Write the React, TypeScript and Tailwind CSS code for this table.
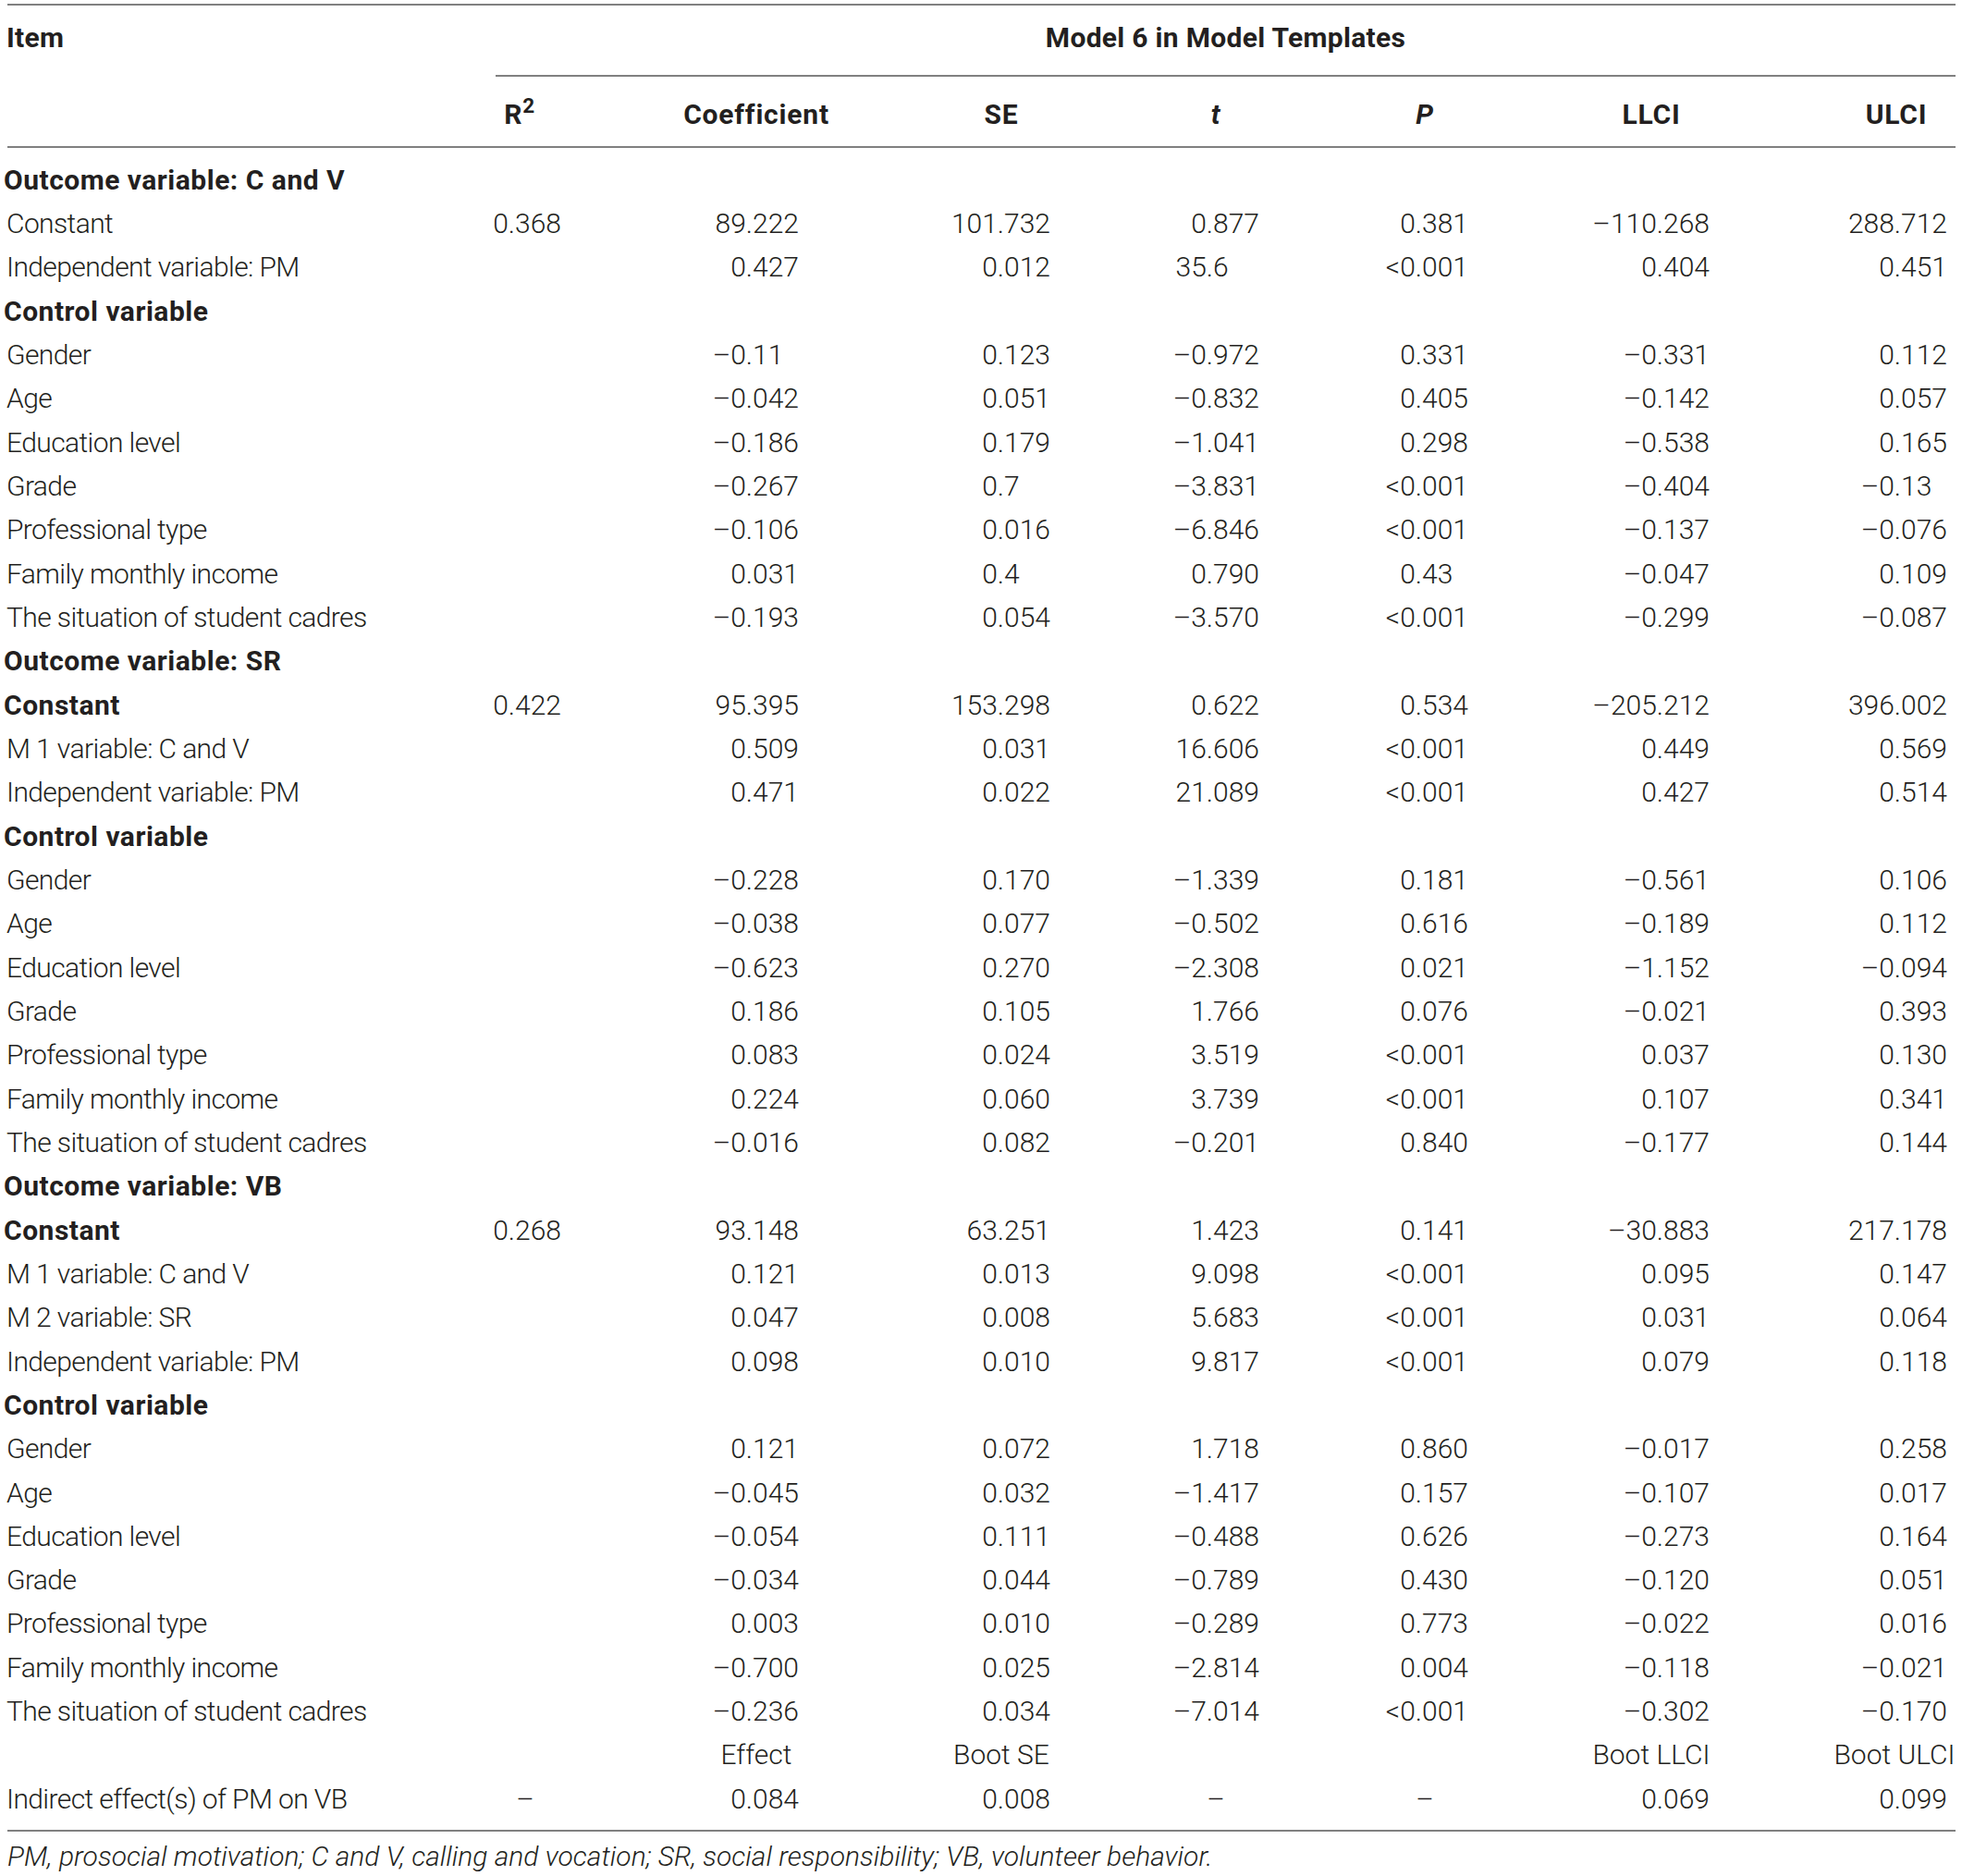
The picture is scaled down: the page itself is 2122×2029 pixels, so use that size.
import React from "react";

type Col = { w: string; split: string; center: string };

const COLS: Col[] = [
  { w: "w-[212px]", split: "w-[77px]", center: "pr-[36px]" },
  { w: "w-[258px]", split: "w-[122px]", center: "pr-[6px]" },
  { w: "w-[249px]", split: "w-[136px]", center: "pl-[17px]" },
  { w: "w-[229px]", split: "w-[113px]", center: "pl-[3px]" },
  { w: "w-[235px]", split: "w-[110px]", center: "pr-[9px]" },
  { w: "w-[256px]", split: "w-[136px]", center: "pr-[10px]" },
  { w: "w-[196px]", split: "w-[137px]", center: "pl-[64px]" },
];

const HEAD_COLS: Col[] = [
  { w: "w-[156px]", split: "", center: "pr-[104px]" },
  ...COLS.slice(1, 6),
  { w: "w-[196px]", split: "", center: "pl-[68px]" },
];

type Row = { label: string; bold?: boolean; vals?: string[]; text?: boolean };

const R = (label: string, ...vals: string[]): Row => ({ label, vals });
const B = (label: string, ...vals: string[]): Row => ({ label, bold: true, vals });

const ROWS: Row[] = [
  B("Outcome variable: C and V"),
  R("Constant", "0.368", "89.222", "101.732", "0.877", "0.381", "–110.268", "288.712"),
  R("Independent variable: PM", "", "0.427", "0.012", "35.6", "<0.001", "0.404", "0.451"),
  B("Control variable"),
  R("Gender", "", "–0.11", "0.123", "–0.972", "0.331", "–0.331", "0.112"),
  R("Age", "", "–0.042", "0.051", "–0.832", "0.405", "–0.142", "0.057"),
  R("Education level", "", "–0.186", "0.179", "–1.041", "0.298", "–0.538", "0.165"),
  R("Grade", "", "–0.267", "0.7", "–3.831", "<0.001", "–0.404", "–0.13"),
  R("Professional type", "", "–0.106", "0.016", "–6.846", "<0.001", "–0.137", "–0.076"),
  R("Family monthly income", "", "0.031", "0.4", "0.790", "0.43", "–0.047", "0.109"),
  R("The situation of student cadres", "", "–0.193", "0.054", "–3.570", "<0.001", "–0.299", "–0.087"),
  B("Outcome variable: SR"),
  B("Constant", "0.422", "95.395", "153.298", "0.622", "0.534", "–205.212", "396.002"),
  R("M 1 variable: C and V", "", "0.509", "0.031", "16.606", "<0.001", "0.449", "0.569"),
  R("Independent variable: PM", "", "0.471", "0.022", "21.089", "<0.001", "0.427", "0.514"),
  B("Control variable"),
  R("Gender", "", "–0.228", "0.170", "–1.339", "0.181", "–0.561", "0.106"),
  R("Age", "", "–0.038", "0.077", "–0.502", "0.616", "–0.189", "0.112"),
  R("Education level", "", "–0.623", "0.270", "–2.308", "0.021", "–1.152", "–0.094"),
  R("Grade", "", "0.186", "0.105", "1.766", "0.076", "–0.021", "0.393"),
  R("Professional type", "", "0.083", "0.024", "3.519", "<0.001", "0.037", "0.130"),
  R("Family monthly income", "", "0.224", "0.060", "3.739", "<0.001", "0.107", "0.341"),
  R("The situation of student cadres", "", "–0.016", "0.082", "–0.201", "0.840", "–0.177", "0.144"),
  B("Outcome variable: VB"),
  B("Constant", "0.268", "93.148", "63.251", "1.423", "0.141", "–30.883", "217.178"),
  R("M 1 variable: C and V", "", "0.121", "0.013", "9.098", "<0.001", "0.095", "0.147"),
  R("M 2 variable: SR", "", "0.047", "0.008", "5.683", "<0.001", "0.031", "0.064"),
  R("Independent variable: PM", "", "0.098", "0.010", "9.817", "<0.001", "0.079", "0.118"),
  B("Control variable"),
  R("Gender", "", "0.121", "0.072", "1.718", "0.860", "–0.017", "0.258"),
  R("Age", "", "–0.045", "0.032", "–1.417", "0.157", "–0.107", "0.017"),
  R("Education level", "", "–0.054", "0.111", "–0.488", "0.626", "–0.273", "0.164"),
  R("Grade", "", "–0.034", "0.044", "–0.789", "0.430", "–0.120", "0.051"),
  R("Professional type", "", "0.003", "0.010", "–0.289", "0.773", "–0.022", "0.016"),
  R("Family monthly income", "", "–0.700", "0.025", "–2.814", "0.004", "–0.118", "–0.021"),
  R("The situation of student cadres", "", "–0.236", "0.034", "–7.014", "<0.001", "–0.302", "–0.170"),
  { label: "", text: true, vals: ["", "Effect", "Boot SE", "", "", "Boot LLCI", "Boot ULCI"] },
  R("Indirect effect(s) of PM on VB", "–", "0.084", "0.008", "–", "–", "0.069", "0.099"),
];

function Cell({ col, v, text }: { col: Col; v: string; text?: boolean }) {
  if (!v) return <div className={`${col.w} shrink-0`} />;
  const dot = v.indexOf(".");
  if (text || dot < 0) {
    return <div className={`${col.w} shrink-0 text-center whitespace-nowrap ${col.center}`}>{v}</div>;
  }
  return (
    <div className={`${col.w} shrink-0 flex whitespace-nowrap`}>
      <span className={`${col.split} shrink-0 text-right`}>{v.slice(0, dot + 1)}</span>
      <span>{v.slice(dot + 1)}</span>
    </div>
  );
}

function Rule({ className = "" }: { className?: string }) {
  return <div className={`h-[2px] bg-[#808080] ${className}`} />;
}

export default function App() {
  return (
    <div className="w-[2122px] h-[2029px] bg-white text-[#231f20] font-['Roboto','Liberation_Sans',sans-serif] text-[30px] font-light leading-[36px]">
      <div className="w-[2115px] pt-[4px]">
        <Rule className="ml-[8px]" />
        <div className="flex h-[152px]">
          <div className="w-[536px] shrink-0 pl-[7px] pt-[17px] font-bold tracking-[0.3px]">Item</div>
          <div className="flex-1 flex flex-col">
            <div className="h-[75px] flex items-center justify-center pb-[5px] font-bold tracking-[0.3px]">
              Model 6 in Model Templates
            </div>
            <Rule />
            <div className="h-[75px] flex items-center pt-[6px] font-bold tracking-[0.8px]">
              {["R2", "Coefficient", "SE", "t", "P", "LLCI", "ULCI"].map((h, i) => (
                <div key={i} className={`${HEAD_COLS[i].w} shrink-0 text-center whitespace-nowrap ${HEAD_COLS[i].center}`}>
                  {h === "R2" ? (
                    <span>
                      R<sup>2</sup>
                    </span>
                  ) : h === "t" || h === "P" ? (
                    <span className="italic">{h}</span>
                  ) : (
                    h
                  )}
                </div>
              ))}
            </div>
          </div>
        </div>
        <Rule className="ml-[8px]" />
        <div className="pt-[11px] pb-[10px]">
          {ROWS.map((r, ri) => (
            <div key={ri} className="h-[47.33px] flex items-center">
              <div
                className={`w-[480px] shrink-0 whitespace-nowrap ${
                  r.bold ? "font-bold pl-[4px] tracking-[0.5px]" : "pl-[7px] tracking-[-0.6px]"
                }`}
              >
                {r.label}
              </div>
              {COLS.map((c, ci) => (
                <Cell key={ci} col={c} v={r.vals ? r.vals[ci] ?? "" : ""} text={r.text} />
              ))}
            </div>
          ))}
        </div>
        <Rule className="ml-[8px]" />
        <div className="pt-[9px] pl-[8px] italic">
          PM, prosocial motivation; C and V, calling and vocation; SR, social responsibility; VB, volunteer behavior.
        </div>
      </div>
    </div>
  );
}
